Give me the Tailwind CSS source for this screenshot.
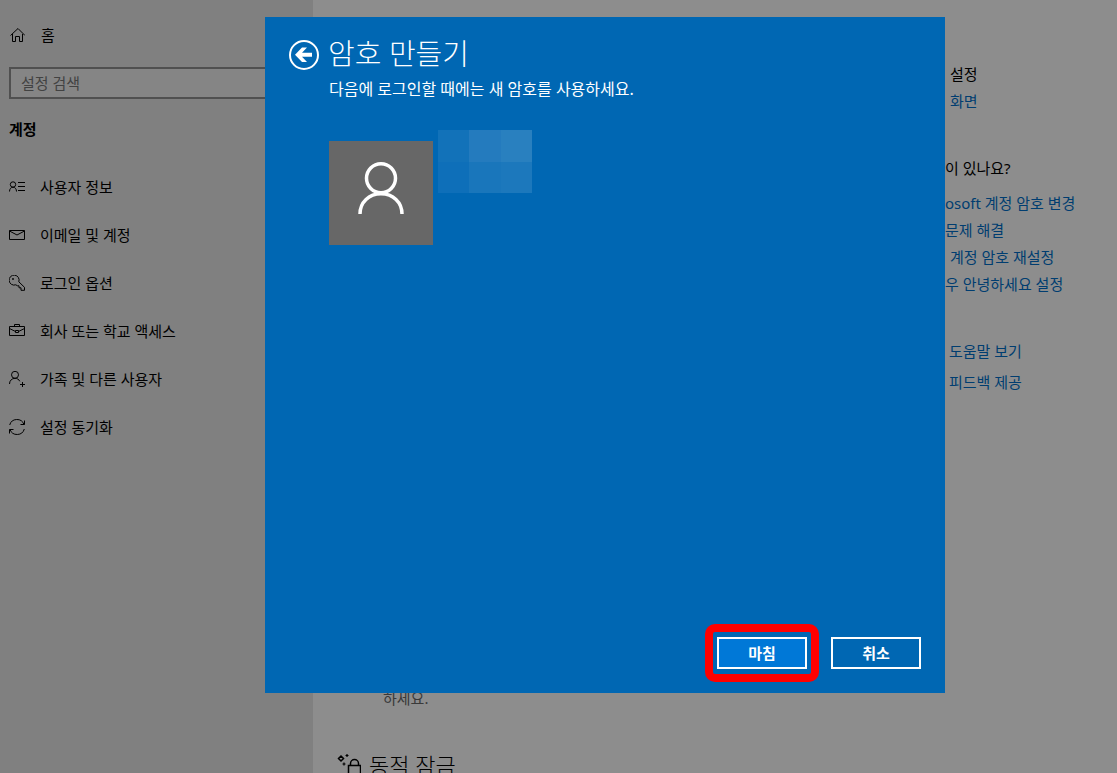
<!DOCTYPE html>
<html lang="ko">
<head>
  <meta charset="UTF-8" />
  <meta name="viewport" content="width=device-width, initial-scale=1.0"/>
  <title>설정</title>
  <script src="https://cdn.jsdelivr.net/npm/@tailwindcss/browser@4"></script>
</head>
<body class="relative flex h-screen overflow-hidden bg-[#8d8d8d] font-['Noto_Sans','Noto_Sans_CJK_KR',sans-serif] text-[15px] text-black">

  <!-- Sidebar -->
  <aside class="w-[313px] shrink-0 bg-[#808080] pt-[11px] px-[9px]">
    <a href="#" class="flex h-12 items-center gap-4">
      <svg class="size-4" viewBox="0 0 16 16" fill="none" stroke="currentColor"><path d="M1.500 8.500 9 1.500l7 7M3.500 7v7.500h3v-5h4v5h3V7"/></svg>
      <span>홈</span>
    </a>
    <input type="text" aria-label="설정 검색" placeholder="설정 검색" class="mt-2 block h-8 w-full border-2 border-[#505050] bg-[#858585] px-[10px] placeholder:text-[#424242]"/>
    <h2 class="mt-[18px] h-6 leading-6 font-bold">계정</h2>
    <nav class="mt-[22px]">
      <a href="#" class="flex h-12 items-center gap-[15px]">
        <svg class="size-4" viewBox="0 0 16 16" fill="none" stroke="currentColor"><circle cx="4" cy="5.500" r="2.700"/><path d="M.5 12.500c0-2.600 1.500-4.300 3.500-4.300s3.500 1.700 3.500 4.300M9 3.500h7M9 7.500h7M9 11.500h7"/></svg>
        <span>사용자 정보</span>
      </a>
      <a href="#" class="flex h-12 items-center gap-[15px]">
        <svg class="size-4" viewBox="0 0 16 16" fill="none" stroke="currentColor"><path d="M.5 3.500h15v9H.5zM.5 4 8 8l7.500-4"/></svg>
        <span>이메일 및 계정</span>
      </a>
      <a href="#" class="flex h-12 items-center gap-[15px]">
        <svg class="size-4" viewBox="0 0 16 16" fill="none" stroke="currentColor"><path d="M9.800 6.800a5 5 0 1 0-3 3l1.700 1h1.500v2h2v2.500h3.500v-3z"/><circle cx="4" cy="4" r=".6"/></svg>
        <span>로그인 옵션</span>
      </a>
      <a href="#" class="flex h-12 items-center gap-[15px]">
        <svg class="size-4" viewBox="0 0 16 16" fill="none" stroke="currentColor"><path d="M.5 3.500h15v9H.5zM5.500 3.500v-2h5v2M.5 5.500l6 3M15.500 5.500l-6 3M6.500 7.500h3v2h-3z"/></svg>
        <span>회사 또는 학교 액세스</span>
      </a>
      <a href="#" class="flex h-12 items-center gap-[15px]">
        <svg class="size-4" viewBox="0 0 16 16" fill="none" stroke="currentColor"><circle cx="6" cy="3.800" r="3.500"/><path d="M.5 13c0-3.500 2.500-5.700 5.500-5.700 2.200 0 4 1.200 4.800 3M13.500 11v5M11 13.500h5"/></svg>
        <span>가족 및 다른 사용자</span>
      </a>
      <a href="#" class="flex h-12 items-center gap-[15px]">
        <svg class="size-4" viewBox="0 0 16 16" fill="none" stroke="currentColor"><path d="M.7 6A7.500 7.500 0 0 1 15 5.500M15.500 1.500v4h-4M15.300 10A7.500 7.500 0 0 1 1 10.500M.5 14.500v-4h4"/></svg>
        <span>설정 동기화</span>
      </a>
    </nav>
  </aside>

  <!-- Sign-in options page -->
  <main class="flex flex-1 flex-col justify-end pl-6">
    <p class="pl-[46px] leading-[22px] text-[#3a3a3a]">하세요.</p>
    <h2 class="-mb-2 mt-10 flex h-8 items-center gap-2 text-[22px] leading-8 font-light">
      <svg class="size-6" viewBox="0 0 24 24" fill="none" stroke="currentColor" stroke-width="1.500"><path d="M11.500 12.500h12v10h-12zM13.500 12.500v-2a4 4 0 0 1 8 0v2M4 3l2.500 2.500L4 8 1.500 5.500z"/><path d="M10 1v3M8.500 2.500h3M7 9.500v3M5.500 11h3" stroke-width="1.200"/></svg>
      <span>동적 잠금</span>
    </h2>
  </main>

  <!-- Related links -->
  <section class="w-[172px] shrink-0 pt-[61px] leading-[27px] whitespace-nowrap">
    <h3 class="pl-[5px]">설정</h3>
    <a href="#" class="block pl-[5px] text-[#003d70]">화면</a>
    <h3 class="mt-10">이 있나요?</h3>
    <div class="mt-2 text-[#003d70]">
      <a href="#" class="block">osoft 계정 암호 변경</a>
      <a href="#" class="block">문제 해결</a>
      <a href="#" class="block pl-[5px]">계정 암호 재설정</a>
      <a href="#" class="block">우 안녕하세요 설정</a>
    </div>
    <div class="mt-10 space-y-1 pl-1 text-[#003d70]">
      <a href="#" class="block">도움말 보기</a>
      <a href="#" class="block">피드백 제공</a>
    </div>
  </section>

  <!-- Password dialog -->
  <div role="dialog" aria-labelledby="dialogTitle" class="absolute top-[17px] right-[172px] bottom-20 left-[265px] flex flex-col bg-[#0067b3] p-6 text-white">
    <header class="flex gap-[7px]">
      <button type="button" aria-label="뒤로" class="-mt-0.5 h-8">
        <svg class="size-8" viewBox="0 0 32 32" fill="none"><circle cx="15" cy="16" r="14" stroke="#fff" stroke-width="2"/><path d="M6 15.700 13 8.500h5l-5 5.200h10v4H13l5 5.200h-5z" fill="#fff"/></svg>
      </button>
      <div>
        <h1 id="dialogTitle" class="-mt-[7px] text-[29px] leading-10 font-light">암호 만들기</h1>
        <p class="mt-[3px] pl-px text-base leading-6">다음에 로그인할 때에는 새 암호를 사용하세요.</p>
      </div>
    </header>

    <div class="ml-10 mt-[29px] flex gap-[5px]">
      <div class="mt-[11px] flex size-[104px] items-center justify-center bg-[#676767] pb-[10px]">
        <svg class="h-[52px] w-12" viewBox="0 0 48 52" fill="none" stroke="#fff" stroke-width="3.500"><circle cx="24" cy="16.300" r="14.500"/><path d="M3 52C3 40 12 31.800 24 31.800S45 40 45 52"/></svg>
      </div>
      <div class="grid h-[63px] w-[94px] grid-cols-3 grid-rows-2">
        <div class="bg-[#1272b9]"></div>
        <div class="bg-[#247bbe]"></div>
        <div class="bg-[#2980bf]"></div>
        <div class="bg-[#0e6fb9]"></div>
        <div class="bg-[#1976bb]"></div>
        <div class="bg-[#1c78bc]"></div>
      </div>
    </div>

    <footer class="mt-auto flex justify-end gap-6 font-bold">
      <div class="relative">
        <button type="button" class="h-8 w-[90px] border-2 border-white bg-[#0078d7]">마침</button>
        <span class="pointer-events-none absolute -inset-x-3 -inset-y-[13px] rounded-[10px] border-8 border-[#ff0000]"></span>
      </div>
      <button type="button" class="h-8 w-[90px] border-2 border-white">취소</button>
    </footer>
  </div>

</body>
</html>
